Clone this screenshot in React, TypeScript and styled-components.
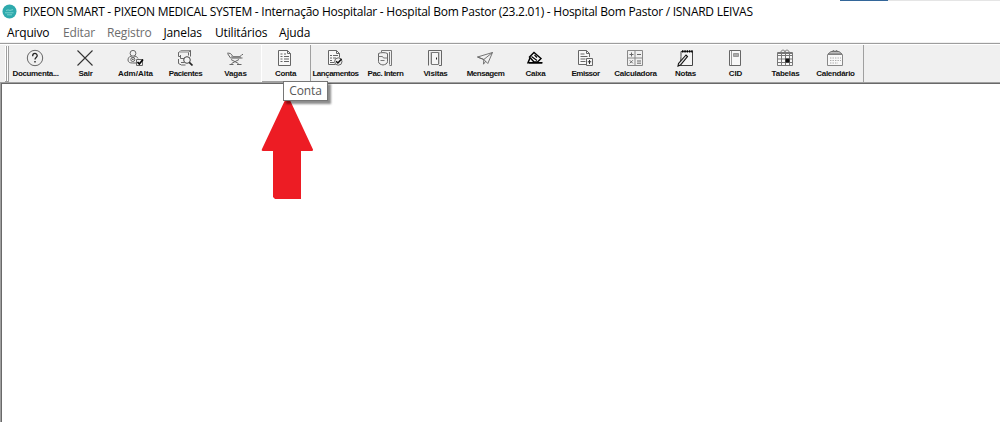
import React from 'react';
import styled, { createGlobalStyle } from 'styled-components';

const GlobalStyle = createGlobalStyle`
  html, body { margin: 0; padding: 0; background: #fff; overflow: hidden; }
`;

const Window = styled.div`
  position: relative;
  display: flex;
  flex-direction: column;
  width: 1000px;
  height: 422px;
  background: #fff;
  color: #000;
  font-family: 'Open Sans', 'Noto Sans', sans-serif;
`;

const TitleBar = styled.header`
  display: flex;
  align-items: center;
  height: 24px;
  padding-left: 2px;
  box-sizing: border-box;
  svg { flex: none; margin: -2px 6px 0 0; }
`;

const Title = styled.span`
  font-size: 12px;
  line-height: 24px;
  letter-spacing: -0.26px;
  white-space: pre;
`;

const TopEdge = styled.div`
  position: absolute;
  top: 0;
  left: 840px;
  width: 160px;
  height: 1px;
  background: linear-gradient(to right, #336699 48px, #e5e5e5 48px);
`;

const MenuBar = styled.nav`
  display: flex;
  height: 18px;
  padding-left: 7px;
`;

const MenuItem = styled.span<{ $width: number; $disabled?: boolean }>`
  flex: none;
  width: ${(p) => p.$width}px;
  font-size: 12px;
  line-height: 18px;
  letter-spacing: -0.15px;
  white-space: nowrap;
  color: ${(p) => (p.$disabled ? '#6d6d6d' : '#000')};
`;

const ToolBar = styled.div`
  display: flex;
  box-sizing: border-box;
  height: 40px;
  flex: none;
  padding-left: 5px;
  background: #f0f0f0;
  border-top: 1px solid #f0f0f0;
  box-shadow: inset 0 1px #9d9d9d, inset 0 2px #fff;
`;

const Grip = styled.div`
  flex: none;
  box-sizing: border-box;
  width: 4px;
  height: 36px;
  margin: 3px 2px 0 0;
  border: solid #a0a0a0;
  border-width: 0 1px 1px 0;
  background: linear-gradient(to right, #fff 1px, #a0a0a0 1px, #a0a0a0 2px, #fff 2px);
`;

const Tool = styled.button<{ $hot?: boolean }>`
  display: flex;
  flex-direction: column;
  align-items: center;
  flex: none;
  box-sizing: border-box;
  width: 50px;
  height: 38px;
  margin: 1px 0 0;
  padding: 5px 2px 0 0;
  border: 0;
  background: ${(p) => (p.$hot ? '#f4f4f4' : 'transparent')};
  box-shadow: ${(p) => (p.$hot ? 'inset 1px 1px #fff, inset -1px -1px #a0a0a0' : 'none')};
  svg { display: block; flex: none; }
`;

const Label = styled.span<{ $spacing: number }>`
  margin: 2px 0 0 1px;
  font: bold 8px/10px 'Liberation Sans', Arial, sans-serif;
  letter-spacing: ${(p) => p.$spacing}px;
  white-space: nowrap;
  color: #111;
`;

const Separator = styled.div`
  flex: none;
  width: 1px;
  height: 37px;
  margin: 2px 0 0 2px;
  background: #a0a0a0;
`;

const Workspace = styled.main`
  flex: 1;
  box-sizing: border-box;
  border: solid #a0a0a0;
  border-width: 1px 0 0 1px;
  box-shadow: inset 1px 1px #696969;
  background: #fff;
`;

const Tooltip = styled.div`
  position: absolute;
  left: 283px;
  top: 81px;
  width: 45px;
  height: 20px;
  box-sizing: border-box;
  border: 1px solid #767676;
  background: #fff;
  box-shadow: 3px 3px 2px rgba(0, 0, 0, 0.45);
  font-size: 12px;
  line-height: 18px;
  letter-spacing: -0.1px;
  text-align: center;
  color: #575757;
`;

const Pointer = styled.svg`
  position: absolute;
  left: 261px;
  top: 98px;
`;

const Icon = ({ children }: { children: React.ReactNode }) => (
  <svg width="18" height="18" viewBox="0 0 18 18" fill="none" stroke="#666" strokeWidth="1">
    {children}
  </svg>
);

const icons = {
  help: (
    <>
      <circle cx="9" cy="9" r="7.7" />
      <path d="M6.7 7.2V6.7a2.2 2.2 0 0 1 4.5 0c0 1.7-2.2 1.7-2.2 3.7" stroke="#222" strokeWidth="1.3" />
      <path d="M9 12v1.5" stroke="#222" strokeWidth="1.4" />
    </>
  ),
  exit: <path d="M1.5 1.5l15 15M16.5 1.5l-15 15" stroke="#333" strokeWidth="1.1" />,
  admission: (
    <>
      <circle cx="7" cy="4.3" r="2.9" />
      <path d="M5 7.2C2.7 7.7 2 9.5 2 11c0 2.3 2 3 4.5 3H10M9 7.2c1.5.3 2.5 1 3 2.3" />
      <circle cx="6.8" cy="10.5" r="2" />
      <path d="M5 7.5l1.8 1.5L9 7.5M6 10.5h1.7" />
      <path d="M10.5 10.5h6v6h-6z" fill="#eee" />
      <path d="M11.5 13l1.8 2 3.7-4.5" stroke="#000" strokeWidth="1.7" />
    </>
  ),
  patients: (
    <>
      <path d="M2.5 3.5l3-2h9v6M2.5 3.5h10v3M12.5 3.5l2-2M4.5 6v3.5h4M2.5 10v4.5l3 1.5h4M2.5 3.5v4h2M5 13.5h3" />
      <path d="M3 3l3-1.5h8L12 4H3z" fill="#bbb" stroke="none" />
      <circle cx="11" cy="11" r="3.3" fill="#f2f2f2" stroke="#444" />
      <path d="M13.3 13.3l3.2 3.2" stroke="#222" strokeWidth="1.7" />
    </>
  ),
  bed: (
    <>
      <path d="M1.5 4l3 .5 2.5 3h7l2-2h1M1.5 4.5l3 4.5h12M5 10.5l7.5 4M13 10.5l-7.5 4M3.5 15.5h4M11 15.5h4.5" />
      <path d="M5 7.3h10v1.9H6z" fill="#888" stroke="none" />
    </>
  ),
  account: (
    <>
      <path d="M2.5 1.5h9l3 3v12h-12zM11.5 1.5v3h3" fill="#f8f8f8" />
      <path d="M4.5 5h2M4.5 7.5h2M4.5 10h2M4.5 12.5h2M8 5h2M8 7.5h5M8 10h5M8 12.5h5" strokeWidth="1.2" />
    </>
  ),
  entries: (
    <>
      <path d="M13.5 8.5v-4l-3-3h-8v14h7M10.5 1.5v3h3" fill="#f8f8f8" />
      <path d="M4 6.5h2M7 6.5h5M4 9h2M7 9h3M4 11.5h2M4 13.5h4" />
      <circle cx="12.3" cy="12.5" r="3.7" fill="#f2f2f2" />
      <path d="M10.1 12.2l1.8 1.8 3.7-4" stroke="#111" strokeWidth="1.5" />
    </>
  ),
  inpatient: (
    <>
      <path d="M5.5 3v-1.5h10v15h-2M13.5 3v12.5" stroke="#777" />
      <path d="M2.5 4.5c2-1.2 7-1.2 9 0v8c0 2.5-2.5 3-4.5 3.5-2-.5-4.5-1-4.5-3.5z" fill="#f0f0f0" />
      <path d="M2.5 7.5h4l1 1.5h4M4.5 11.5h4" stroke="#777" />
    </>
  ),
  door: (
    <>
      <path d="M2.5 16.5v-15h13v15H13" />
      <path d="M4 3h10v12H4z" fill="#ccc" stroke="none" />
      <path d="M5.5 3.5h7v12h-7z" fill="#f5f5f5" stroke="#777" />
      <path d="M10.5 8.5v2" stroke="#222" />
    </>
  ),
  message: (
    <path d="M1.5 8L16.5 3.5l-4.7 11-4-4zM1.5 8l6.3 2.5 8.7-7M7.8 10.5l-.3 4.7 2.2-3" strokeWidth=".9" />
  ),
  cash: (
    <>
      <path d="M3.5 8l4.5-4.5L15 9.5 11.5 13H8z" stroke="#000" strokeWidth="1.4" fill="#f8f8f8" />
      <path d="M5.5 7.5l5.5 4M8.5 6l2.5 2.5" stroke="#000" strokeWidth="1.1" />
      <path d="M4 9l-2 4.7h14.5M3 14h13" stroke="#000" strokeWidth="1.5" />
    </>
  ),
  issuer: (
    <>
      <path d="M13.5 8V4.5l-3-3h-8v14h8M10.5 1.5v3h3" fill="#f8f8f8" />
      <path d="M4.5 5h4M4.5 7.5h7M4.5 10h5M4.5 12.5h5" />
      <path d="M10.5 9.5h6v7h-6z" fill="#f4f4f4" />
      <path d="M13.5 11v4M11.8 12.8h3.4" stroke="#333" />
    </>
  ),
  calculator: (
    <>
      <path d="M1.5 1.5h15v15h-15zM9 1.5v15M1.5 9h15" stroke="#888" />
      <path d="M3.5 5.5h4M5.5 3.5v4M11 5.5h4M3.8 11.3l3 3M6.8 11.3l-3 3M11 12h4M11 14.2h4" stroke="#666" />
    </>
  ),
  notes: (
    <>
      <path d="M5 2.5h11.5v14h-12l.5-9z" fill="#f5f5f5" stroke="#444" />
      <path d="M6 2.3h11" stroke="#000" strokeWidth="2.2" strokeDasharray="1.5 .8" />
      <path d="M10 6l-7.5 8.5L2 17l2.5-1L11.5 7.5z" fill="#ddd" stroke="#111" strokeWidth="1.1" />
    </>
  ),
  book: (
    <>
      <path d="M3.5 1.5h11v15h-11z" fill="#f8f8f8" />
      <path d="M5.5 2v14" stroke="#999" />
      <path d="M7.5 4.5h5v3h-5z" fill="#aaa" stroke="#999" />
    </>
  ),
  table: (
    <>
      <path d="M1.5 3.5h15v13h-15zM1.5 6.5h15M1.5 10h15M1.5 13.5h15M5.5 3.5v13M9.5 3.5v13M13.5 3.5v13" fill="#f8f8f8" stroke="#777" />
      <path d="M5 3c0-2.5 4-2.5 4 0 0-2.5 4-2.5 4 0M2 4.5h14" stroke="#777" />
      <path d="M9.5 9.5h4v4h-4z" fill="#111" stroke="none" />
    </>
  ),
  calendar: (
    <>
      <path d="M1.5 5.5h15v11h-15z" fill="#f8f8f8" stroke="#888" />
      <path d="M2 5l3-2.5h8L16 5z" fill="#bbb" stroke="#777" />
      <path d="M6.5 2.5c0-1.3 1.7-1.3 2.5 0 .8-1.3 2.5-1.3 2.5 0" />
      <path d="M4 9h11M4 11.5h11M4 14h8" stroke="#aaa" strokeDasharray="1.4 1.1" />
    </>
  ),
};

type ToolEntry = { icon: keyof typeof icons; label: string; spacing: number; hot?: boolean };

const tools: ToolEntry[] = [
  { icon: 'help', label: 'Documenta...', spacing: -0.35 },
  { icon: 'exit', label: 'Sair', spacing: -0.3 },
  { icon: 'admission', label: 'Adm/Alta', spacing: 0 },
  { icon: 'patients', label: 'Pacientes', spacing: -0.45 },
  { icon: 'bed', label: 'Vagas', spacing: -0.1 },
  { icon: 'account', label: 'Conta', spacing: -0.3, hot: true },
  { icon: 'entries', label: 'Lançamentos', spacing: -0.5 },
  { icon: 'inpatient', label: 'Pac. Intern', spacing: -0.45 },
  { icon: 'door', label: 'Visitas', spacing: -0.2 },
  { icon: 'message', label: 'Mensagem', spacing: -0.45 },
  { icon: 'cash', label: 'Caixa', spacing: -0.3 },
  { icon: 'issuer', label: 'Emissor', spacing: -0.5 },
  { icon: 'calculator', label: 'Calculadora', spacing: -0.3 },
  { icon: 'notes', label: 'Notas', spacing: -0.2 },
  { icon: 'book', label: 'CID', spacing: -0.1 },
  { icon: 'table', label: 'Tabelas', spacing: -0.2 },
  { icon: 'calendar', label: 'Calendário', spacing: -0.3 },
];

const menus = [
  { label: 'Arquivo', width: 56 },
  { label: 'Editar', width: 44, disabled: true },
  { label: 'Registro', width: 56.5, disabled: true },
  { label: 'Janelas', width: 51.5 },
  { label: 'Utilitários', width: 64 },
  { label: 'Ajuda', width: 40 },
];

export default function App() {
  return (
    <>
      <GlobalStyle />
      <Window>
        <TitleBar>
          <svg width="15" height="15" viewBox="0 0 15 15">
            <circle cx="7.5" cy="7.5" r="7" fill="#2eaaad" />
            <path d="M3 8.8h8.5M4 6.5l2-.6 2 .5 3-.8M5 10.8h5" stroke="#8bdad6" strokeWidth=".8" fill="none" />
          </svg>
          <Title>PIXEON SMART - PIXEON MEDICAL SYSTEM - Internação Hospitalar - Hospital Bom Pastor (23.2.01) - Hospital Bom Pastor / ISNARD LEIVAS</Title>
        </TitleBar>
        <TopEdge />
        <MenuBar>
          {menus.map((m) => (
            <MenuItem key={m.label} $width={m.width} $disabled={m.disabled}>{m.label}</MenuItem>
          ))}
        </MenuBar>
        <ToolBar>
          <Grip />
          {tools.map((t) => (
            <Tool key={t.label} $hot={t.hot}>
              <Icon>{icons[t.icon]}</Icon>
              <Label $spacing={t.spacing}>{t.label}</Label>
            </Tool>
          ))}
          <Separator />
        </ToolBar>
        <Workspace />
        <Pointer width="53" height="102" viewBox="0 0 53 102">
          <path d="M25 0h3L52 51.5c0 1-.5 1.5-1.5 1.5H40v48H14l-2-2V53H2c-1.5 0-1.5-1-1-2z" fill="#ed1c24" />
        </Pointer>
        <Tooltip>Conta</Tooltip>
      </Window>
    </>
  );
}
